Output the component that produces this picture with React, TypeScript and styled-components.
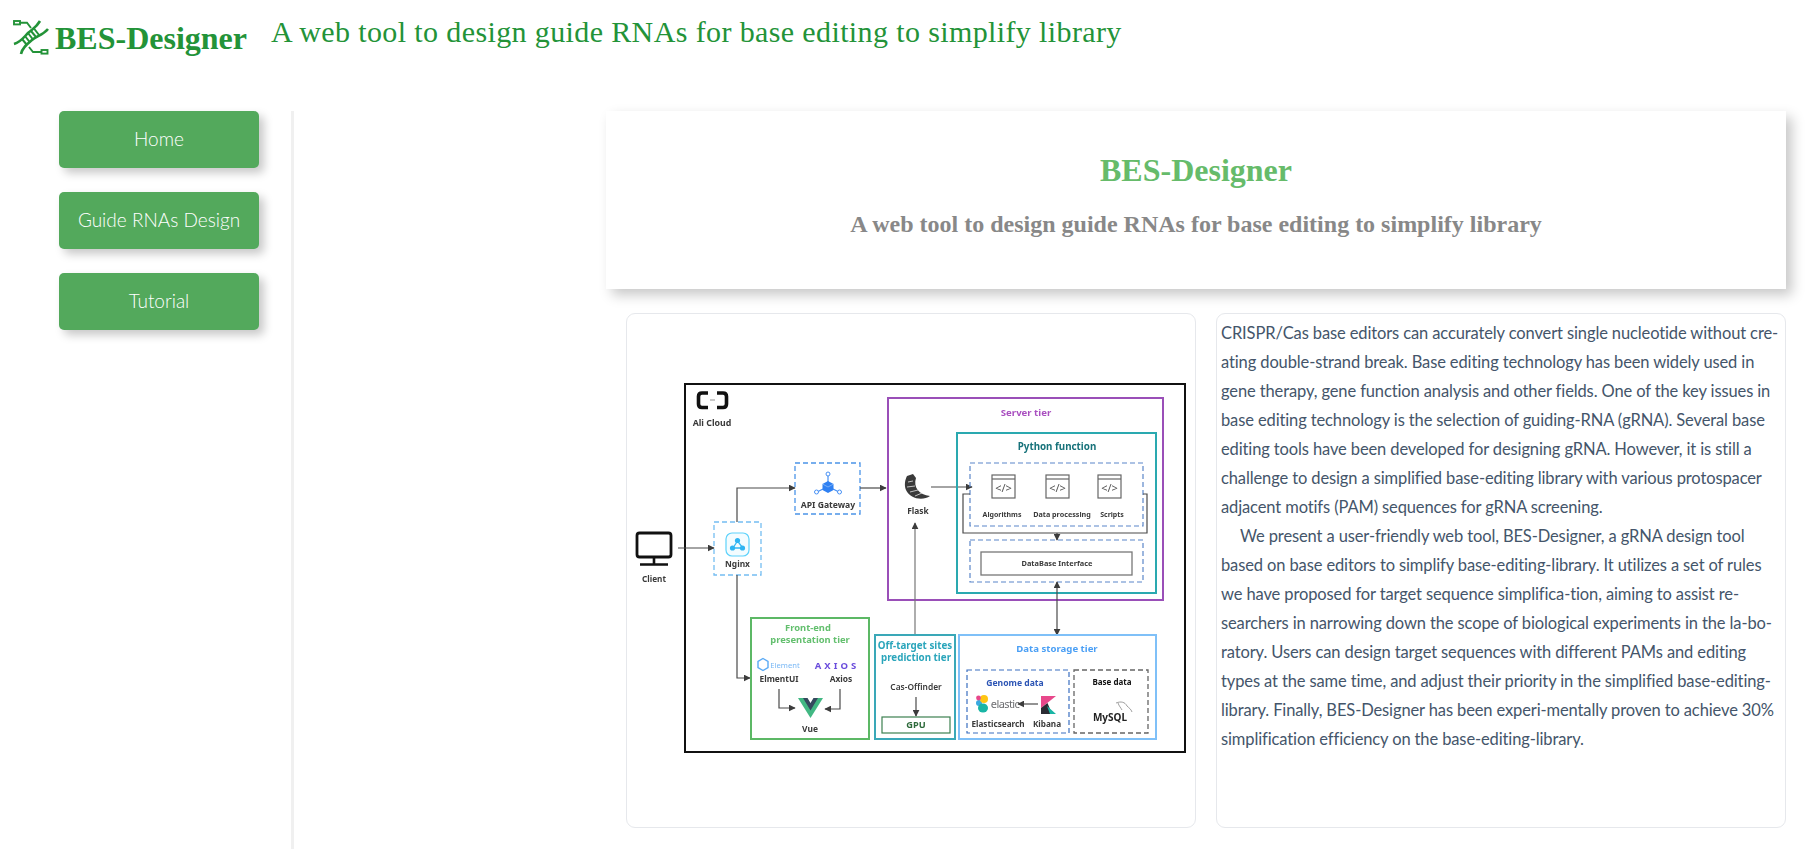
import styled, { createGlobalStyle } from "styled-components";

const GlobalStyle = createGlobalStyle`
    html, body {
        margin: 0;
        padding: 0;
        background: #fff;
    }
    body {
        font-family: Lato, "Noto Sans", sans-serif;
        overflow: hidden;
    }
`;

const Page = styled.div`
    width: 1808px;
    height: 849px;
    display: flex;
    flex-direction: column;
`;

const Header = styled.header`
    height: 111px;
    flex-shrink: 0;
    display: flex;
    align-items: flex-start;
    padding-left: 13px;
    box-sizing: border-box;
    color: #239338;
    font-family: "Liberation Serif", "Times New Roman", serif;
`;

const LogoMark = styled.svg`
    width: 36px;
    height: 36px;
    margin-top: 20px;
    flex-shrink: 0;
`;

const Brand = styled.div`
    margin: 20px 0 0 6px;
    font-size: 32px;
    line-height: 37px;
    font-weight: 700;
`;

const Tagline = styled.div`
    margin: 13px 0 0 24px;
    font-size: 30px;
    line-height: 37px;
    letter-spacing: 0.38px;
    white-space: nowrap;
`;

const Body = styled.div`
    flex: 1;
    display: flex;
    min-height: 0;
`;

const Sidebar = styled.nav`
    width: 294px;
    box-sizing: border-box;
    padding-left: 59px;
    border-right: 3px solid #f0f0f0;
    display: flex;
    flex-direction: column;
    gap: 24px;
`;

const NavButton = styled.div`
    width: 200px;
    height: 57px;
    box-sizing: border-box;
    padding-bottom: 3px;
    border-radius: 5px;
    background: #53a95c;
    color: #fff;
    font-size: 19px;
    font-weight: 300;
    display: flex;
    align-items: center;
    justify-content: center;
    box-shadow: 5px 5px 10px rgba(0, 0, 0, 0.22);
`;

const Main = styled.main`
    flex: 1;
    padding: 0 22px 0 312px;
    min-width: 0;
`;

const Hero = styled.section`
    height: 178px;
    box-sizing: border-box;
    padding-top: 41px;
    background: #fff;
    box-shadow: 6px 6px 12px rgba(0, 0, 0, 0.22);
    text-align: center;
    font-family: "Liberation Serif", "Times New Roman", serif;
    font-weight: 700;
`;

const HeroTitle = styled.h1`
    margin: 0;
    font-size: 32px;
    line-height: 37px;
    color: #66bb6a;
`;

const HeroSubtitle = styled.h2`
    margin: 21px 0 0;
    font-size: 24px;
    line-height: 28px;
    color: #888;
`;

const CardRow = styled.div`
    margin-top: 24px;
    padding: 0 1px 0 20px;
    display: grid;
    grid-template-columns: 570px 570px;
    gap: 20px;
`;

const Card = styled.div`
    height: 515px;
    box-sizing: border-box;
    border: 1px solid #e6e8ec;
    border-radius: 9px;
    background: #fff;
`;

const DiagramCard = styled(Card)`
    display: flex;
    align-items: center;
    justify-content: center;
`;

const TextCard = styled(Card)`
    padding: 5px 4px 0;
`;

const Abstract = styled.p<{ $indent?: boolean }>`
    margin: 0;
    font-size: 16.5px;
    line-height: 29px;
    font-weight: 400;
    letter-spacing: -0.12px;
    color: #44556a;
    white-space: nowrap;
    text-indent: ${(props) => (props.$indent ? "19px" : "0")};
`;

const Diagram = styled.svg`
    display: block;
    width: 568px;
    height: 513px;
    filter: blur(0.35px);
`;

const Label = styled.text<{ $color?: string; $size?: number; $weight?: number }>`
    font-family: "Noto Sans", sans-serif;
    font-size: ${(props) => props.$size ?? 8}px;
    font-weight: ${(props) => props.$weight ?? 700};
    fill: ${(props) => props.$color ?? "#3a3a3a"};
    text-anchor: middle;
`;

const Frame = styled.rect<{ $color: string; $width?: number; $dashed?: boolean }>`
    fill: none;
    stroke: ${(props) => props.$color};
    stroke-width: ${(props) => props.$width ?? 2}px;
    stroke-dasharray: ${(props) => (props.$dashed ? "5 3" : "none")};
`;

const Wire = styled.polyline<{ $color?: string }>`
    fill: none;
    stroke: ${(props) => props.$color ?? "#4a4a4a"};
    stroke-width: 1.2px;
`;

type Box = { x: number; y: number; x2: number; y2: number };

const FrameBox = ({ b, color, width, dashed }: { b: Box; color: string; width?: number; dashed?: boolean }) => (
    <Frame x={b.x} y={b.y} width={b.x2 - b.x} height={b.y2 - b.y} $color={color} $width={width} $dashed={dashed} />
);

const Arrow = ({ points, color, start }: { points: string; color?: string; start?: boolean }) => (
    <Wire
        points={points}
        $color={color}
        markerEnd="url(#head)"
        markerStart={start ? "url(#head)" : undefined}
    />
);

const CodeIcon = ({ x }: { x: number }) => (
    <g>
        <Frame x={x} y={475} width={23} height={23} $color="#666" $width={1.2} />
        <Wire points={`${x},479 ${x + 23},479`} $color="#666" />
        <Label x={x + 11.5} y={491.5} $size={11} $weight={400} $color="#555">
            {"</>"}
        </Label>
    </g>
);

const ArchitectureDiagram = () => (
    <Diagram viewBox="627 314 568 513">
        <defs>
            <marker
                id="head"
                viewBox="0 0 10 10"
                refX="9"
                refY="5"
                markerWidth="7"
                markerHeight="7"
                markerUnits="userSpaceOnUse"
                orient="auto-start-reverse"
            >
                <path d="M0 0 L10 5 L0 10 Z" fill="#3c3c3c" />
            </marker>
        </defs>

        <FrameBox b={{ x: 685, y: 384, x2: 1185, y2: 752 }} color="#111" />

        {/* ali cloud */}
        <path
            d="M708 393 H702 Q698.5 393 698.5 396.5 V404 Q698.5 407.5 702 407.5 H708 M717 393 H723 Q726.5 393 726.5 396.5 V404 Q726.5 407.5 723 407.5 H717"
            fill="none"
            stroke="#111"
            strokeWidth="3.6"
        />
        <path d="M710 400 H715" stroke="#777" strokeWidth="0.8" />
        <Label x={712} y={426} $size={8.8}>
            Ali Cloud
        </Label>

        {/* client */}
        <rect x={637} y={533} width={34} height={24} rx={2.5} fill="none" stroke="#111" strokeWidth="2.8" />
        <path d="M654 557 V564 M640 564.5 H668" stroke="#111" strokeWidth="2.6" fill="none" />
        <Label x={654} y={582} $size={8.2}>
            Client
        </Label>
        <Arrow points="678,548 714,548" />

        {/* nginx */}
        <FrameBox b={{ x: 714, y: 522, x2: 761, y2: 575 }} color="#74bdf2" width={1.3} dashed />
        <rect x={726} y={533} width={23} height={23} rx={6} fill="#f3fcff" stroke="#5ed2fb" strokeWidth="1.2" />
        <path d="M737.5 541 L733 548 H743 Z" fill="none" stroke="#35b7f3" strokeWidth="1.3" />
        <circle cx={737.5} cy={540.5} r={2.6} fill="#2fb4f2" />
        <circle cx={732.5} cy={548} r={2.6} fill="#2fb4f2" />
        <circle cx={742.5} cy={548} r={2.6} fill="#2fb4f2" />
        <Label x={737.5} y={567} $size={8.4}>
            Nginx
        </Label>
        <Arrow points="737,522 737,488 795,488" />
        <Arrow points="737,575 737,678 750,678" />

        {/* api gateway */}
        <FrameBox b={{ x: 795, y: 463, x2: 860, y2: 514 }} color="#4b94e8" width={1.3} dashed />
        <path d="M828 476 V482 M823 489 L817 492 M833 489 L839 492" stroke="#4690f4" strokeWidth="1.2" />
        <circle cx={828} cy={474} r={2} fill="#fff" stroke="#4690f4" />
        <circle cx={816.5} cy={492} r={2} fill="#fff" stroke="#4690f4" />
        <circle cx={839.5} cy={492} r={2} fill="#fff" stroke="#4690f4" />
        <path d="M828 481 L833.5 484 V490 L828 493 L822.5 490 V484 Z" fill="#2f80f2" />
        <path d="M822.5 484 L828 487 L833.5 484" fill="none" stroke="#a8ccfa" strokeWidth="0.6" />
        <Label x={828} y={508} $size={8.6}>
            API Gateway
        </Label>
        <Arrow points="860,488 886,488" />

        {/* server tier */}
        <FrameBox b={{ x: 888, y: 398, x2: 1163, y2: 600 }} color="#9a4fb8" />
        <Label x={1026} y={416} $size={9.6} $color="#a94fc0">
            Server tier
        </Label>

        {/* flask */}
        <path
            d="M907 476 L913 474 L916 478 C913 487 919 495 930 496 C923 501 910 499 906 490 C904 485 905 480 907 476 Z"
            fill="#3a3a3a"
        />
        <path d="M908 482 L913 481 M907 487 L915 486 M910 492 L918 490 M915 496 L922 493" stroke="#e4e4e4" strokeWidth="0.8" />
        <Label x={918} y={514} $size={8.4}>
            Flask
        </Label>
        <Arrow points="931,487 972,487" />
        <Arrow points="915,635 915,523" color="#777" />

        {/* python function */}
        <FrameBox b={{ x: 957, y: 433, x2: 1156, y2: 593 }} color="#2aa9b0" />
        <Label x={1057} y={450} $size={9.8} $color="#17727a">
            Python function
        </Label>
        <FrameBox b={{ x: 970, y: 463, x2: 1143, y2: 526 }} color="#5b86c9" width={1.2} dashed />
        <CodeIcon x={992} />
        <CodeIcon x={1046} />
        <CodeIcon x={1098} />
        <Label x={1002} y={517} $size={7}>
            Algorithms
        </Label>
        <Label x={1062} y={517} $size={7.2}>
            Data processing
        </Label>
        <Label x={1112} y={517} $size={7}>
            Scripts
        </Label>
        <Wire points="970,494 963,494 963,533 1147,533 1147,494 1143,494" />
        <Arrow points="1057,533 1057,540" />
        <FrameBox b={{ x: 970, y: 540, x2: 1143, y2: 582 }} color="#5b86c9" width={1.2} dashed />
        <FrameBox b={{ x: 981, y: 552, x2: 1132, y2: 575 }} color="#777" width={1.3} />
        <Label x={1057} y={566} $size={7.4}>
            DataBase Interface
        </Label>
        <Arrow points="1057,635 1057,582" start />

        {/* front-end tier */}
        <FrameBox b={{ x: 751, y: 618, x2: 869, y2: 739 }} color="#5cb865" />
        <Label x={808} y={631} $size={9.4} $color="#63bf6e">
            Front-end
        </Label>
        <Label x={810} y={643} $size={9.4} $color="#63bf6e">
            presentation tier
        </Label>
        <path d="M763 658.5 L768 661.5 V667.5 L763 670.5 L758 667.5 V661.5 Z" fill="none" stroke="#5aaaf5" strokeWidth="1.4" />
        <Label x={785} y={667.5} $size={7.6} $weight={400} $color="#79b8f5">
            Element
        </Label>
        <Label x={837} y={669} $size={9.5} $weight={700} $color="#6a4cdc" letterSpacing="3">
            AXIOS
        </Label>
        <Label x={779} y={682} $size={8.4}>
            ElmentUI
        </Label>
        <Label x={841} y={682} $size={8.4}>
            Axios
        </Label>
        <Arrow points="779,689 779,708 795,708" />
        <Arrow points="840,689 840,709 825,709" />
        <path d="M798 698 H807 L810.5 704 L814 698 H823 L810.5 718 Z" fill="#42b883" />
        <path d="M803 698 H807.5 L810.5 703 L813.5 698 H818 L810.5 710.5 Z" fill="#35495e" />
        <Label x={810} y={732} $size={8.4}>
            Vue
        </Label>

        {/* off-target tier */}
        <FrameBox b={{ x: 875, y: 635, x2: 955, y2: 739 }} color="#3aa8b8" />
        <Label x={915} y={649} $size={9.8} $color="#2aa5bb">
            Off-target sites
        </Label>
        <Label x={916} y={661} $size={9.8} $color="#2aa5bb">
            prediction tier
        </Label>
        <Label x={916} y={690} $size={8.4} $weight={600}>
            Cas-Offinder
        </Label>
        <Arrow points="916,697 916,716" />
        <FrameBox b={{ x: 882, y: 717, x2: 950, y2: 733 }} color="#3c8050" width={1.2} />
        <Label x={916} y={728} $size={9.2} $color="#2d6a3a">
            GPU
        </Label>

        {/* data storage tier */}
        <FrameBox b={{ x: 959, y: 635, x2: 1156, y2: 739 }} color="#7fc0f8" />
        <Label x={1057} y={652} $size={9.6} $color="#4a9ff5">
            Data storage tier
        </Label>
        <FrameBox b={{ x: 967, y: 670, x2: 1069, y2: 733 }} color="#3b6fc0" width={1.2} dashed />
        <Label x={1015} y={686} $size={8.6} $color="#2c55b5">
            Genome data
        </Label>
        <circle cx={979} cy={703} r={3} fill="#39a9e0" />
        <circle cx={984} cy={699} r={4} fill="#fec514" />
        <circle cx={978.5} cy={698} r={2.4} fill="#e8478b" />
        <ellipse cx={983} cy={708} rx={5} ry={4.6} fill="#19b5a5" />
        <Label x={1005} y={708} $size={11} $weight={400} $color="#6d6e71" letterSpacing="-0.6">
            elastic
        </Label>
        <Arrow points="1038,704 1018,704" />
        <path d="M1041 696 H1056 L1041 708 Z" fill="#e8488b" />
        <path d="M1041 708 L1047.5 703 L1052 714 H1041 Z" fill="#2b2b33" />
        <path d="M1047 706 L1056 714 H1050 Z" fill="#19b5a5" />
        <Label x={998} y={727} $size={8.2}>
            Elasticsearch
        </Label>
        <Label x={1047} y={727} $size={8.2}>
            Kibana
        </Label>
        <FrameBox b={{ x: 1074, y: 670, x2: 1148, y2: 733 }} color="#666" width={1.3} dashed />
        <Label x={1112} y={685} $size={8} $color="#111">
            Base data
        </Label>
        <Label x={1110} y={721} $size={10} $color="#222">
            MySQL
        </Label>
        <path
            d="M1116 703 C1121 701 1125 702 1127 706 C1129 708 1131 709 1132 712 M1118 703 C1119 706 1121 708 1122 710"
            fill="none"
            stroke="#777"
            strokeWidth="0.7"
        />
    </Diagram>
);

const App = () => {
    return (
        <Page>
            <GlobalStyle />
            <Header>
                <LogoMark viewBox="0 0 36 36">
                    <g fill="none" stroke="#239338" strokeWidth="2.6">
                        <rect x="1" y="1" width="6" height="3.4" strokeWidth="1.9" />
                        <path d="M7 2.7 H14 L18 8" strokeWidth="1.9" />
                        <rect x="28.5" y="30" width="6" height="3.6" strokeWidth="1.9" />
                        <path d="M28.5 32 H20 L16 27" strokeWidth="1.9" />
                        <path d="M1 24 C8 22 11 17 15 13 C19 9 23 8 27 1" />
                        <path d="M8 34 C9 28 14 24 19 20 C24 16 30 15 35 9" />
                        <path d="M9 19 L14 25 M12 16 L17 22.5 M15 13 L20 19.5 M18 11 L23 17 M21 8.5 L26 15" strokeWidth="2" />
                    </g>
                </LogoMark>
                <Brand>BES-Designer</Brand>
                <Tagline>A web tool to design guide RNAs for base editing to simplify library</Tagline>
            </Header>
            <Body>
                <Sidebar>
                    <NavButton>Home</NavButton>
                    <NavButton>Guide RNAs Design</NavButton>
                    <NavButton>Tutorial</NavButton>
                </Sidebar>
                <Main>
                    <Hero>
                        <HeroTitle>BES-Designer</HeroTitle>
                        <HeroSubtitle>A web tool to design guide RNAs for base editing to simplify library</HeroSubtitle>
                    </Hero>
                    <CardRow>
                        <DiagramCard>
                            <ArchitectureDiagram />
                        </DiagramCard>
                        <TextCard>
                            <Abstract>
                                CRISPR/Cas base editors can accurately convert single nucleotide without cre-
                                <br />
                                ating double-strand break. Base editing technology has been widely used in
                                <br />
                                gene therapy, gene function analysis and other fields. One of the key issues in
                                <br />
                                base editing technology is the selection of guiding-RNA (gRNA). Several base
                                <br />
                                editing tools have been developed for designing gRNA. However, it is still a
                                <br />
                                challenge to design a simplified base-editing library with various protospacer
                                <br />
                                adjacent motifs (PAM) sequences for gRNA screening.
                            </Abstract>
                            <Abstract $indent>
                                We present a user-friendly web tool, BES-Designer, a gRNA design tool
                                <br />
                                based on base editors to simplify base-editing-library. It utilizes a set of rules
                                <br />
                                we have proposed for target sequence simplifica-tion, aiming to assist re-
                                <br />
                                searchers in narrowing down the scope of biological experiments in the la-bo-
                                <br />
                                ratory. Users can design target sequences with different PAMs and editing
                                <br />
                                types at the same time, and adjust their priority in the simplified base-editing-
                                <br />
                                library. Finally, BES-Designer has been experi-mentally proven to achieve 30%
                                <br />
                                simplification efficiency on the base-editing-library.
                            </Abstract>
                        </TextCard>
                    </CardRow>
                </Main>
            </Body>
        </Page>
    );
};

export default App;
